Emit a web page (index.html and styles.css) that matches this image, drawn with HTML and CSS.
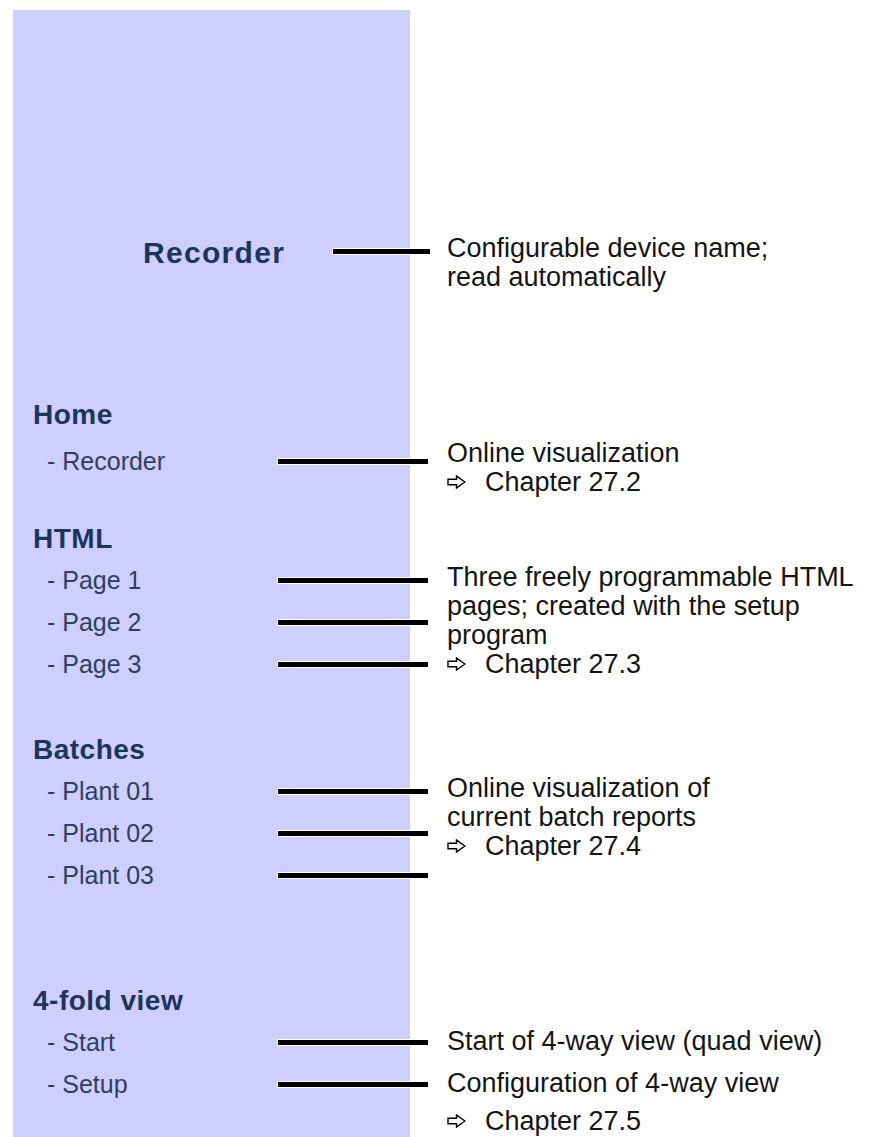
FILE: index.html
```html
<!DOCTYPE html>
<html lang="en">
<head>
    <meta charset="UTF-8">
    <meta name="viewport" content="width=device-width, initial-scale=1.0">
    <title>Web menu overview</title>
    <link rel="stylesheet" href="styles.css">
</head>
<body>
    <div class="page">
        <!-- device name -->
        <section class="group group-device">
            <div class="menu">
                <div class="device-row">
                    <span class="device-name">Recorder</span>
                    <span class="leader leader-short"></span>
                </div>
            </div>
            <div class="note note-device">
                <div>Configurable device name;</div>
                <div>read automatically</div>
            </div>
        </section>

        <section class="group group-home">
            <div class="menu">
                <div class="menu-head">Home</div>
                <div class="menu-item"><span class="label">- Recorder</span><span class="leader"></span></div>
            </div>
            <div class="note">
                <div>Online visualization</div>
                <div class="ref"><svg class="arrow" viewBox="0 0 19 14"><path d="M1 4.3H9.5V1L17.8 7L9.5 13V9.7H1Z"/></svg>Chapter 27.2</div>
            </div>
        </section>

        <section class="group group-html">
            <div class="menu">
                <div class="menu-head">HTML</div>
                <div class="menu-item"><span class="label">- Page 1</span><span class="leader"></span></div>
                <div class="menu-item"><span class="label">- Page 2</span><span class="leader"></span></div>
                <div class="menu-item"><span class="label">- Page 3</span><span class="leader"></span></div>
            </div>
            <div class="note">
                <div>Three freely programmable HTML</div>
                <div>pages; created with the setup</div>
                <div>program</div>
                <div class="ref"><svg class="arrow" viewBox="0 0 19 14"><path d="M1 4.3H9.5V1L17.8 7L9.5 13V9.7H1Z"/></svg>Chapter 27.3</div>
            </div>
        </section>

        <section class="group group-batches">
            <div class="menu">
                <div class="menu-head">Batches</div>
                <div class="menu-item"><span class="label">- Plant 01</span><span class="leader"></span></div>
                <div class="menu-item"><span class="label">- Plant 02</span><span class="leader"></span></div>
                <div class="menu-item"><span class="label">- Plant 03</span><span class="leader"></span></div>
            </div>
            <div class="note">
                <div>Online visualization of</div>
                <div>current batch reports</div>
                <div class="ref"><svg class="arrow" viewBox="0 0 19 14"><path d="M1 4.3H9.5V1L17.8 7L9.5 13V9.7H1Z"/></svg>Chapter 27.4</div>
            </div>
        </section>

        <section class="group group-quad">
            <div class="menu">
                <div class="menu-head">4-fold view</div>
                <div class="menu-item"><span class="label">- Start</span><span class="leader"></span></div>
                <div class="menu-item"><span class="label">- Setup</span><span class="leader"></span></div>
            </div>
            <div class="note note-quad">
                <div class="row-line">Start of 4-way view (quad view)</div>
                <div class="row-line">Configuration of 4-way view</div>
                <div class="ref ref-low"><svg class="arrow" viewBox="0 0 19 14"><path d="M1 4.3H9.5V1L17.8 7L9.5 13V9.7H1Z"/></svg>Chapter 27.5</div>
            </div>
        </section>
    </div>
</body>
</html>
```

FILE: styles.css
```css
body {
    margin: 0;
    background-color: #fff;
}
.page {
    display: flex;
    flex-direction: column;
    margin: 10px 0 0 13px;
    min-height: 1127px;
    background: linear-gradient(to right, #ceceff 397px, transparent 397px);
}
.group {
    display: grid;
    grid-template-columns: 417px 1fr;
    column-gap: 17px;
    align-items: start;
}
.group-device {
    margin-top: 227px;
}
.group-home {
    margin-top: 107px;
}
.group-html {
    margin-top: 26px;
}
.group-batches {
    margin-top: 49px;
}
.group-quad {
    margin-top: 89px;
}

/* left: the menu as shown in the browser */
.device-row {
    display: flex;
    align-items: flex-start;
    height: 32px;
}
.device-name {
    margin-left: 130px;
    font: bold 30px/32px "Liberation Sans", Arial, sans-serif;
    letter-spacing: 1.3px;
    color: #1b365c;
}
.menu-head {
    padding-left: 20px;
    margin-bottom: 5px;
    font: bold 28px/31px "Liberation Sans", Arial, sans-serif;
    letter-spacing: 0.5px;
    color: #1b365c;
}
.group-home .menu-head {
    margin-bottom: 10px;
}
.menu-item {
    display: flex;
    align-items: flex-start;
    height: 42px;
    font: 25px/42px "Liberation Sans", Arial, sans-serif;
    color: #2e3f62;
}
.label {
    box-sizing: border-box;
    flex: 0 0 265px;
    padding-left: 34px;
}
.leader {
    flex: 0 0 150px;
    height: 5px;
    margin-top: 19px;
    background-color: #000;
    box-shadow: 0 0 0 1px #fff;
}
.leader-short {
    flex-basis: 97px;
    margin-top: 12px;
    margin-left: auto;
}

/* right: explanations */
.note {
    margin-top: 40px;
    font: 27px/29px "Liberation Sans", Arial, sans-serif;
    color: #151515;
    white-space: nowrap;
}
.note-device {
    margin-top: -3px;
}
.note-quad {
    margin-top: 35px;
}
.row-line {
    line-height: 42px;
}
.ref-low {
    margin-top: 3px;
}
.arrow {
    width: 19px;
    height: 14px;
    margin-right: 19px;
    vertical-align: 2px;
    fill: none;
    stroke: #000;
    stroke-width: 1.4;
}
```
